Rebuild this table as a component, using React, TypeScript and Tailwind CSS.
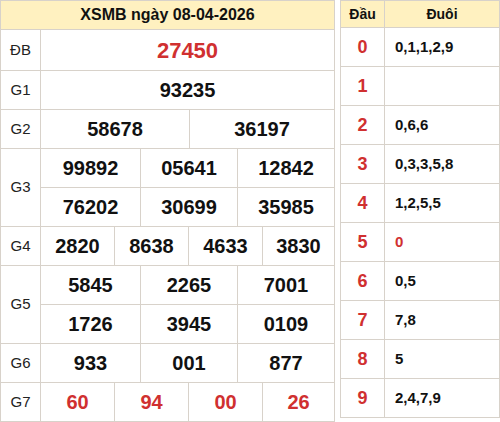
import React from "react";

const B = "border-[#d8d2ca]";
const RED = "text-[#d03030]";

type Row = { label: string; rows: { cols: string; nums: string[] }[]; red?: boolean; big?: boolean; h?: string };

const data: Row[] = [
  { label: "ĐB", rows: [{ cols: "grid-cols-1", nums: ["27450"] }], red: true, big: true, h: "h-[41px]" },
  { label: "G1", rows: [{ cols: "grid-cols-1", nums: ["93235"] }] },
  { label: "G2", rows: [{ cols: "grid-cols-[149px_1fr]", nums: ["58678", "36197"] }] },
  {
    label: "G3",
    rows: [
      { cols: "grid-cols-[100px_97px_1fr]", nums: ["99892", "05641", "12842"] },
      { cols: "grid-cols-[100px_97px_1fr]", nums: ["76202", "30699", "35985"] },
    ],
  },
  { label: "G4", rows: [{ cols: "grid-cols-[74px_74px_74px_1fr]", nums: ["2820", "8638", "4633", "3830"] }] },
  {
    label: "G5",
    rows: [
      { cols: "grid-cols-[100px_97px_1fr]", nums: ["5845", "2265", "7001"] },
      { cols: "grid-cols-[100px_97px_1fr]", nums: ["1726", "3945", "0109"] },
    ],
  },
  { label: "G6", rows: [{ cols: "grid-cols-[100px_97px_1fr]", nums: ["933", "001", "877"] }] },
  { label: "G7", rows: [{ cols: "grid-cols-[74px_74px_74px_1fr]", nums: ["60", "94", "00", "26"] }], red: true },
];

const tails = ["0,1,1,2,9", "", "0,6,6", "0,3,3,5,8", "1,2,5,5", "0", "0,5", "7,8", "5", "2,4,7,9"];

export default function App() {
  return (
    <div
      className="flex gap-[5px] w-[500px] h-[422px] bg-white items-start"
      style={{ fontFamily: '"Liberation Sans", Arial, sans-serif' }}
    >
      <div className={`w-[335px] border-t border-l ${B} flex flex-col`}>
        <div
          className={`h-[29px] border-r border-b ${B} bg-[#fff1c0] flex items-center justify-center text-[16px] font-bold text-[#111]`}
        >
          XSMB ngày 08-04-2026
        </div>
        {data.map((r) => (
          <div key={r.label} className="flex">
            <div
              className={`w-[40px] shrink-0 border-r border-b ${B} flex items-center justify-center text-[15px] text-[#222]`}
            >
              {r.label}
            </div>
            <div className="flex-1 flex flex-col">
              {r.rows.map((sub, i) => (
                <div key={i} className={`grid ${sub.cols}`}>
                  {sub.nums.map((n, j) => (
                    <div
                      key={j}
                      className={`${r.h ?? "h-[39px]"} border-r border-b ${B} flex items-center justify-center font-bold ${
                        r.big ? "text-[22px]" : "text-[20px]"
                      } ${r.red ? RED : "text-[#111]"}`}
                    >
                      {n}
                    </div>
                  ))}
                </div>
              ))}
            </div>
          </div>
        ))}
      </div>

      <div className={`w-[160px] border-t border-l ${B} flex flex-col`}>
        <div className={`flex h-[27px] bg-[#fff1c0] text-[14px] font-bold text-[#111]`}>
          <div className={`w-[44px] border-r border-b ${B} flex items-center justify-center`}>Đầu</div>
          <div className={`flex-1 border-r border-b ${B} flex items-center justify-center`}>Đuôi</div>
        </div>
        {tails.map((t, i) => (
          <div key={i} className="flex h-[39px]">
            <div className={`w-[44px] border-r border-b ${B} flex items-center justify-center text-[18px] font-bold ${RED}`}>
              {i}
            </div>
            <div
              className={`flex-1 border-r border-b ${B} flex items-center pl-[10px] text-[15px] font-bold ${
                i === 5 ? RED : "text-[#111]"
              }`}
            >
              {t}
            </div>
          </div>
        ))}
      </div>
    </div>
  );
}
